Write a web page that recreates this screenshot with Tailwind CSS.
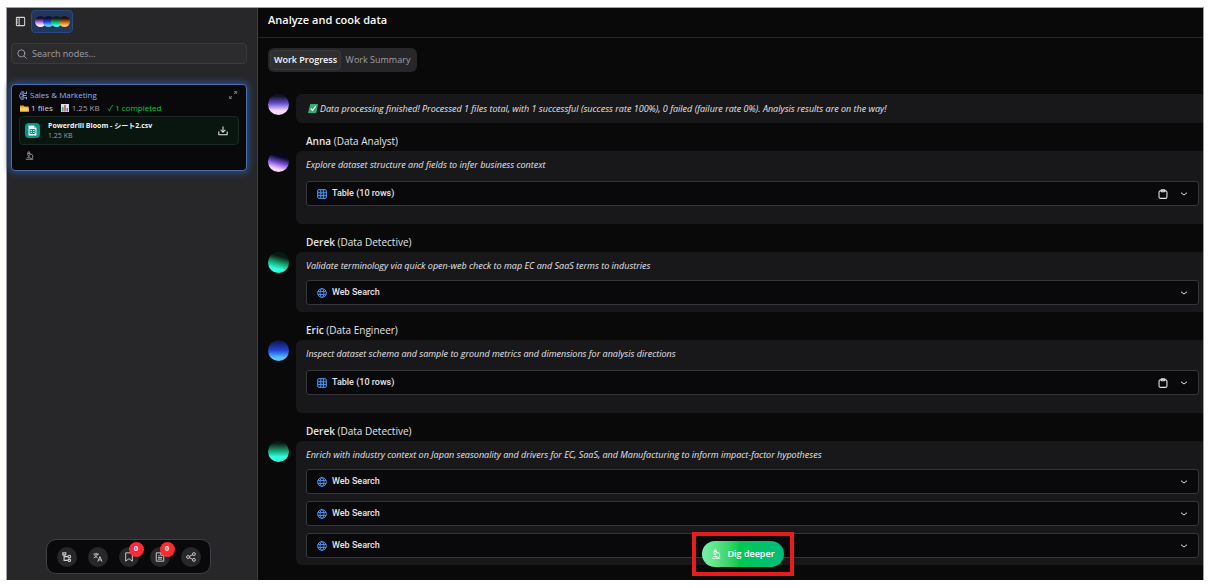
<!DOCTYPE html>
<html lang="en">
<head>
<meta charset="utf-8">
<title>Analyze and cook data</title>
<script src="https://cdn.jsdelivr.net/npm/@tailwindcss/browser@4"></script>
</head>
<body class="bg-white">
<svg class="hidden" aria-hidden="true">
  <symbol id="table" viewBox="0 0 24 24" fill="none" stroke="currentColor" stroke-width="2.4"><rect x="1.500" y="1.500" width="21" height="21" rx="3" fill="currentColor" fill-opacity=".15"/><path d="M2 9h20M2 15.500h20M9 2v20M15.500 2v20"/></symbol>
  <symbol id="globe" viewBox="0 0 24 24" fill="none" stroke="currentColor" stroke-width="2.4"><circle cx="12" cy="12" r="10.500"/><ellipse cx="12" cy="12" rx="4.800" ry="10.500"/><path d="M2.500 8.500h19M2.500 15.500h19"/></symbol>
  <symbol id="chev" viewBox="0 0 24 24" fill="none" stroke="currentColor" stroke-width="3" stroke-linecap="round" stroke-linejoin="round"><path d="m4 9 8 6 8-6"/></symbol>
  <symbol id="clip" viewBox="0 0 24 24" fill="none" stroke="currentColor" stroke-width="2.600" stroke-linejoin="round"><rect x="2.500" y="4" width="19" height="18.500" rx="3.500"/><rect x="7.500" y="2" width="9" height="4.500" rx="1"/></symbol>
  <symbol id="scope" viewBox="0 0 24 24" fill="none" stroke="currentColor" stroke-width="2.200" stroke-linecap="round" stroke-linejoin="round"><path d="M6 18h8M3 22h18M14 22a7 7 0 1 0 0-14h-1M9 14h2M9 12a2 2 0 0 1-2-2V6h6v4a2 2 0 0 1-2 2ZM12 6V3a1 1 0 0 0-1-1H9a1 1 0 0 0-1 1v3"/></symbol>
</svg>
<div class="flex min-h-screen flex-col px-1.5 pt-[7px] pb-2 font-['Open_Sans','Noto_Sans_CJK_JP',sans-serif] text-zinc-200">
<div class="flex flex-1 border border-b-0 border-zinc-400 bg-[#090909]">

  <aside class="flex w-[251px] shrink-0 flex-col border-r border-zinc-700 bg-[#27272a] pt-0.5">
    <div class="flex items-center pl-2">
      <button aria-label="Toggle sidebar" class="text-zinc-300"><svg class="size-[11px]" viewBox="0 0 24 24" fill="none" stroke="currentColor" stroke-width="2.200"><rect x="3" y="3" width="18" height="18" rx="1.500"/><path d="M9 3v18M3 7h3M3 11h3M3 15h3"/></svg></button>
      <button aria-label="Team" class="ml-[5px] flex h-[23px] w-[42px] items-center justify-center rounded border border-[#284a80] bg-[#24355a]">
        <span class="size-[11px] rounded-full bg-linear-to-b from-[#15102e] from-20% via-[#a873ee] via-55% to-[#fff0ff] to-85%"></span>
        <span class="-ml-[3px] size-[11px] rounded-full bg-linear-to-b from-[#0a1033] from-20% via-[#2747dc] via-55% to-[#64c4ff] to-85%"></span>
        <span class="-ml-[3px] size-[11px] rounded-full bg-linear-to-b from-[#062118] from-20% via-[#17a76b] via-55% to-[#2ffcd8] to-85%"></span>
        <span class="-ml-[3px] size-[11px] rounded-full bg-linear-to-b from-[#201008] from-20% via-[#b96c1b] via-55% to-[#ffc45a] to-85%"></span>
      </button>
    </div>
    <label class="mt-2.5 mr-2.5 ml-1 flex h-[21px] items-center gap-[5px] rounded border border-[#3a3a3e] bg-[#2c2c2f] px-[5px] text-zinc-400">
      <svg class="size-[10px]" viewBox="0 0 24 24" fill="none" stroke="currentColor" stroke-width="2.200" stroke-linecap="round"><circle cx="10.500" cy="10.500" r="8.500"/><path d="m17 17 5.500 5.500"/></svg>
      <input aria-label="Search nodes" placeholder="Search nodes..." class="min-w-0 flex-1 bg-transparent text-[9px] outline-none placeholder:text-zinc-400">
    </label>
    <section class="mt-5 mr-2.5 ml-1 flex h-[87px] flex-col rounded border border-[#4a6fa8] bg-[#09090b] px-[7px] pt-1 shadow-[0_0_6px_2px_#2c4c86]">
      <div class="flex h-[12px] items-center text-[8px] text-[#8ab4f8]">
        <svg class="size-[9px]" viewBox="0 0 24 24" fill="none" stroke="currentColor" stroke-width="2.400" stroke-linecap="round"><path d="M10 2C4 2 4 6 5 8c-4 1-5 5-2 8 0 5 4 7 7 6M11 2v20M7 8c2 0 3 1 4 3M7 16c2 0 3-1 4-3M14 6h6M14 18h6M13 12h6M20 6V3M20 18v3"/></svg>
        <h2 class="ml-0.5 flex-1">Sales &amp; Marketing</h2>
        <button aria-label="Expand" class="pr-0.5 text-zinc-400"><svg class="size-[8px]" viewBox="0 0 24 24" fill="none" stroke="currentColor" stroke-width="2.200"><path d="M15 2h7v7M22 2l-7 7M9 22H2v-7M2 22l7-7"/></svg></button>
      </div>
      <div class="mt-px flex h-[12px] items-center text-[8px] text-zinc-400">
        <svg class="mx-px h-[7px] w-[9px]" viewBox="0 0 18 14"><path d="M0 1h7l2 2h8v10H0z" fill="#dfa336"/><path d="M0 5h17l1 8H0z" fill="#ffc957"/></svg>
        <span class="ml-px text-zinc-300">1 files</span>
        <svg class="ml-2 size-[8px]" viewBox="0 0 16 16"><path d="M0 0h16v16H0z" fill="#dbe4ea"/><path d="M2 6h3v9H2z" fill="#35a373"/><path d="M6.500 2h3v13h-3z" fill="#dd3f55"/><path d="M11 8h3v7h-3z" fill="#3480cf"/></svg>
        <span class="ml-[3px]">1.25 KB</span>
        <span class="ml-2 flex gap-0.5 text-[#00c951]"><span>✓</span><span>1 completed</span></span>
      </div>
      <div class="mt-0.5 flex h-[29px] items-center rounded border border-[#1d2924] bg-[#08160f] pr-2.5 pl-[5px]">
        <span class="flex size-[15px] items-center justify-center rounded-sm bg-[#0d9488]"><svg class="h-[11px] w-[9px]" viewBox="0 0 18 22"><path d="M1 1h11l5 5v15H1z" fill="#e9fffb"/><path d="M12 1v5h5" fill="#7cc9c0"/><path d="M4 9h10v8H4zM9 9v8M4 13h10" fill="none" stroke="#0d9488" stroke-width="2"/></svg></span>
        <div class="ml-2 min-w-0 flex-1 text-[7px] leading-[10px] whitespace-nowrap"><p class="font-bold text-zinc-100">Powerdrill Bloom - シート2.csv</p><p class="text-zinc-400">1.25 KB</p></div>
        <button aria-label="Download" class="text-zinc-200"><svg class="size-[10px]" viewBox="0 0 24 24" fill="none" stroke="currentColor" stroke-width="2.500" stroke-linecap="round" stroke-linejoin="round"><path d="M12 2v13M7 10l5 5 5-5M2 14v7h20v-7"/></svg></button>
      </div>
      <button aria-label="Dig deeper into file" class="mt-1.5 ml-1.5 self-start text-zinc-400"><svg class="size-[9px]"><use href="#scope"/></svg></button>
    </section>
    <nav class="mt-auto mb-1.5 ml-[39px] flex h-[35px] w-[165px] items-center justify-center gap-[11px] rounded-[10px] border border-zinc-700 bg-[#09090b] text-zinc-300">
      <button aria-label="Tree" class="flex size-5 items-center justify-center rounded-full bg-[#27272a]"><svg class="size-[10px]" viewBox="0 0 24 24" fill="none" stroke="currentColor" stroke-width="2.600"><rect x="2" y="2" width="7" height="5"/><path d="M5 7v13h9M5 11h9"/><circle cx="17.500" cy="11" r="3.200"/><circle cx="17.500" cy="20" r="3"/></svg></button>
      <button aria-label="Language" class="flex size-5 items-center justify-center rounded-full bg-[#27272a]"><svg class="size-[10px]" viewBox="0 0 24 24" fill="none" stroke="currentColor" stroke-width="2.200"><path d="M1 5h13M7.500 2v3M11 5c-1 4-5 8-9 9M4 7c2 4 4 5 7 7M11.500 23l5-12 5 12M13.500 19h6"/></svg></button>
      <button aria-label="Bookmarks, 0" class="relative flex size-5 items-center justify-center rounded-full bg-[#27272a]"><svg class="size-[10px]" viewBox="0 0 24 24" fill="none" stroke="currentColor" stroke-width="2.200" stroke-linejoin="round"><path d="M4 2h16v20l-8-6-8 6z"/></svg><span class="absolute -top-[5px] -right-[5px] flex size-[15px] items-center justify-center rounded-full bg-[#fb2c36] text-[7px] font-bold text-white">0</span></button>
      <button aria-label="Notes, 0" class="relative flex size-5 items-center justify-center rounded-full bg-[#27272a]"><svg class="size-[10px]" viewBox="0 0 24 24" fill="none" stroke="currentColor" stroke-width="2.200" stroke-linejoin="round"><path d="M3 2h12l6 5v15H3zM14 2v6h6M8 9h3M7 13h10M7 17h10"/></svg><span class="absolute -top-[5px] -right-[5px] flex size-[15px] items-center justify-center rounded-full bg-[#fb2c36] text-[7px] font-bold text-white">0</span></button>
      <button aria-label="Share" class="flex size-5 items-center justify-center rounded-full bg-[#27272a]"><svg class="size-[10px]" viewBox="0 0 24 24" fill="none" stroke="currentColor" stroke-width="2.200"><circle cx="5" cy="12" r="3.500"/><circle cx="19" cy="5" r="3.500"/><circle cx="19" cy="19" r="3.500"/><path d="m8 10.500 8-4M8 13.500l8 4"/></svg></button>
    </nav>
  </aside>

  <main class="relative min-w-0 flex-1">
    <header class="flex h-[30px] items-center border-b border-zinc-800 pb-1 pl-2.5"><h1 class="text-[11px] font-semibold text-zinc-50">Analyze and cook data</h1></header>
    <div role="tablist" class="mt-2.5 ml-2.5 flex h-6 w-[149px] items-center rounded-md bg-[#27272a] px-0.5 text-[9px] whitespace-nowrap">
      <button role="tab" aria-selected="true" class="h-5 w-[71px] shrink-0 rounded border border-[#3a3a3e] bg-[#2f2f32] font-semibold text-zinc-50">Work Progress</button>
      <button role="tab" aria-selected="false" class="h-5 flex-1 font-medium text-zinc-400">Work Summary</button>
    </div>

    <div class="mt-[22px] flex flex-col gap-2.5 pl-2.5">
      <article class="flex gap-[7px]">
        <span class="size-[21px] shrink-0 rounded-full bg-linear-to-b from-[#11112b] from-10% via-[#6b4fd0] via-45% to-[#fbdcff] to-80%"></span>
        <div class="flex h-[29px] min-w-0 flex-1 items-center gap-0.5 rounded-l-md bg-[#18181b] px-3 text-[9px] italic">
          <svg class="h-[9px] w-[10px] shrink-0" viewBox="0 0 22 18" preserveAspectRatio="none"><path d="M5 0h17l-4 18H0z" fill="#35a875"/><path d="m6 9 4 4 7-9" fill="none" stroke="#e8fff4" stroke-width="2.500"/></svg>
          <p class="whitespace-nowrap">Data processing finished! Processed 1 files total, with 1 successful (success rate 100%), 0 failed (failure rate 0%). Analysis results are on the way!</p>
        </div>
      </article>

      <article class="flex gap-[7px]">
        <span class="mt-[18px] size-[21px] shrink-0 rounded-full bg-linear-15 from-[#ffd4ff] from-20% via-[#7c4be0] via-45% to-[#05091c] to-70%"></span>
        <div class="min-w-0 flex-1">
          <h3 class="h-[18px] pl-2.5 text-[10px] leading-4"><b class="font-semibold">Anna</b> (Data Analyst)</h3>
          <div class="rounded-l-md bg-[#18181b] pt-[7px] pr-1 pb-[18px] pl-2.5">
            <p class="text-[9px] leading-[14px] italic">Explore dataset structure and fields to infer business context</p>
            <div class="mt-[9px] flex h-[25px] items-center rounded-[3px] border border-[#36363a] bg-[#09090b] px-2.5 font-['Roboto',sans-serif] text-[9px] font-medium">
              <svg class="size-[10px] text-[#4a90f0]"><use href="#table"/></svg><span class="ml-[5px] flex-1">Table (10 rows)</span>
              <button aria-label="Copy table" class="mr-3"><svg class="size-[10px]"><use href="#clip"/></svg></button>
              <button aria-label="Expand"><svg class="size-[8px]"><use href="#chev"/></svg></button>
            </div>
          </div>
        </div>
      </article>

      <article class="flex gap-[7px]">
        <span class="mt-[18px] size-[21px] shrink-0 rounded-full bg-linear-15 from-[#30ffe0] from-25% via-[#169c66] via-50% to-[#071a14] to-75%"></span>
        <div class="min-w-0 flex-1">
          <h3 class="h-[18px] pl-2.5 text-[10px] leading-4"><b class="font-semibold">Derek</b> (Data Detective)</h3>
          <div class="rounded-l-md bg-[#18181b] py-[7px] pr-1 pl-2.5">
            <p class="text-[9px] leading-[14px] italic">Validate terminology via quick open-web check to map EC and SaaS terms to industries</p>
            <button class="mt-[7px] flex h-[25px] w-full items-center rounded-[3px] border border-[#36363a] bg-[#09090b] px-2.5 text-left font-['Roboto',sans-serif] text-[9px] font-medium">
              <svg class="size-[10px] text-[#4a90f0]"><use href="#globe"/></svg><span class="ml-[5px] flex-1">Web Search</span><svg class="size-[8px]"><use href="#chev"/></svg>
            </button>
          </div>
        </div>
      </article>

      <article class="flex gap-[7px]">
        <span class="mt-[18px] size-[21px] shrink-0 rounded-full bg-linear-to-b from-[#0b1347] via-[#2544d8] via-50% to-[#5bc4ff] to-85%"></span>
        <div class="min-w-0 flex-1">
          <h3 class="h-[18px] pl-2.5 text-[10px] leading-4"><b class="font-semibold">Eric</b> (Data Engineer)</h3>
          <div class="rounded-l-md bg-[#18181b] pt-[7px] pr-1 pb-[18px] pl-2.5">
            <p class="text-[9px] leading-[14px] italic">Inspect dataset schema and sample to ground metrics and dimensions for analysis directions</p>
            <div class="mt-[9px] flex h-[25px] items-center rounded-[3px] border border-[#36363a] bg-[#09090b] px-2.5 font-['Roboto',sans-serif] text-[9px] font-medium">
              <svg class="size-[10px] text-[#4a90f0]"><use href="#table"/></svg><span class="ml-[5px] flex-1">Table (10 rows)</span>
              <button aria-label="Copy table" class="mr-3"><svg class="size-[10px]"><use href="#clip"/></svg></button>
              <button aria-label="Expand"><svg class="size-[8px]"><use href="#chev"/></svg></button>
            </div>
          </div>
        </div>
      </article>

      <article class="flex gap-[7px]">
        <span class="mt-[18px] size-[21px] shrink-0 rounded-full bg-linear-to-t from-[#30ffe0] from-25% via-[#159a68] via-55% to-[#071a14] to-90%"></span>
        <div class="min-w-0 flex-1">
          <h3 class="h-[18px] pl-2.5 text-[10px] leading-4"><b class="font-semibold">Derek</b> (Data Detective)</h3>
          <div class="flex flex-col gap-[7px] rounded-l-md bg-[#18181b] py-[7px] pr-1 pl-2.5">
            <p class="text-[9px] leading-[14px] italic">Enrich with industry context on Japan seasonality and drivers for EC, SaaS, and Manufacturing to inform impact-factor hypotheses</p>
            <button class="flex h-[25px] w-full items-center rounded-[3px] border border-[#36363a] bg-[#09090b] px-2.5 text-left font-['Roboto',sans-serif] text-[9px] font-medium">
              <svg class="size-[10px] text-[#4a90f0]"><use href="#globe"/></svg><span class="ml-[5px] flex-1">Web Search</span><svg class="size-[8px]"><use href="#chev"/></svg>
            </button>
            <button class="flex h-[25px] w-full items-center rounded-[3px] border border-[#36363a] bg-[#09090b] px-2.5 text-left font-['Roboto',sans-serif] text-[9px] font-medium">
              <svg class="size-[10px] text-[#4a90f0]"><use href="#globe"/></svg><span class="ml-[5px] flex-1">Web Search</span><svg class="size-[8px]"><use href="#chev"/></svg>
            </button>
            <button class="flex h-[25px] w-full items-center rounded-[3px] border border-[#36363a] bg-[#09090b] px-2.5 text-left font-['Roboto',sans-serif] text-[9px] font-medium">
              <svg class="size-[10px] text-[#4a90f0]"><use href="#globe"/></svg><span class="ml-[5px] flex-1">Web Search</span><svg class="size-[8px]"><use href="#chev"/></svg>
            </button>
          </div>
        </div>
      </article>
    </div>

    <div class="absolute bottom-1 left-[434px] border-4 border-[#e81c1c] px-1.5 py-[5px]">
      <button class="flex h-[26px] w-[82px] items-center justify-center gap-1.5 rounded-full bg-linear-to-r from-[#7bf1a8] via-[#00c950] via-45% to-[#00bc7d] text-[9px] font-semibold text-white"><svg class="size-[10px]"><use href="#scope"/></svg>Dig deeper</button>
    </div>
  </main>
</div>
</div>
</body>
</html>
